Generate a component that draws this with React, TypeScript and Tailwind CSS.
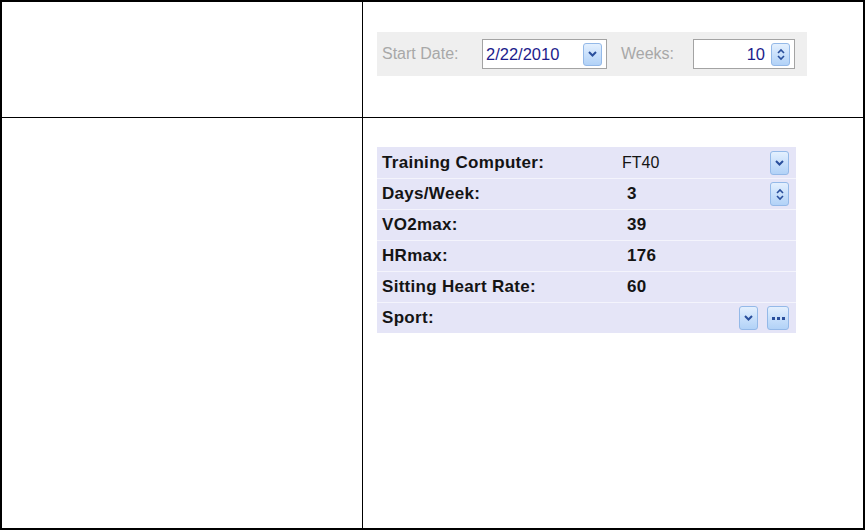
import React from 'react';

// Small XP-style blue button used for combos, spinners and the "..." picker
function BlueButton({ kind, className = '' }: { kind: 'down' | 'spin' | 'more'; className?: string }) {
  return (
    <div
      className={`flex items-center justify-center rounded-[3px] border border-[#94b9e8] bg-gradient-to-b from-[#e4f0fe] via-[#c9e0fb] to-[#b2d2f7] ${className}`}
    >
      {kind === 'down' && (
        <svg width="9" height="6" viewBox="0 0 9 6">
          <path d="M1 1 L4.5 4.5 L8 1" fill="none" stroke="#2a4f9c" strokeWidth="2" />
        </svg>
      )}
      {kind === 'spin' && (
        <svg width="8" height="13" viewBox="0 0 8 13">
          <path d="M1 5 L4 2 L7 5" fill="none" stroke="#2a4f9c" strokeWidth="1.6" />
          <path d="M1 8 L4 11 L7 8" fill="none" stroke="#2a4f9c" strokeWidth="1.6" />
        </svg>
      )}
      {kind === 'more' && (
        <svg width="13" height="3" viewBox="0 0 13 3">
          <rect x="0" y="0" width="3" height="3" fill="#2a4f9c" />
          <rect x="5" y="0" width="3" height="3" fill="#2a4f9c" />
          <rect x="10" y="0" width="3" height="3" fill="#2a4f9c" />
        </svg>
      )}
    </div>
  );
}

interface SettingRow {
  label: string;
  value?: string;
  bold?: boolean;
  control?: 'down' | 'spin' | 'sport';
}

const rows: SettingRow[] = [
  { label: 'Training Computer:', value: 'FT40', bold: false, control: 'down' },
  { label: 'Days/Week:', value: '3', bold: true, control: 'spin' },
  { label: 'VO2max:', value: '39', bold: true },
  { label: 'HRmax:', value: '176', bold: true },
  { label: 'Sitting Heart Rate:', value: '60', bold: true },
  { label: 'Sport:', control: 'sport' },
];

export default function App() {
  return (
    <div className="w-[866px] h-[531px] bg-white" style={{ fontFamily: '"Liberation Sans", Arial, sans-serif' }}>
      <div className="w-[865px] h-[530px] border-2 border-black grid grid-cols-[360px_1fr] grid-rows-[115px_1fr]">
        {/* top row */}
        <div />
        <div className="border-l border-black pl-[14px] pt-[30px]">
          <div className="w-[430px] h-[44px] bg-[#efefef] flex items-center pl-[5px] text-[16px]">
            <span className="w-[100px] text-[#a8a8a8]">Start Date:</span>
            <div className="w-[125px] h-[30px] bg-white border border-[#a3a3a3] flex items-center pl-[3px] pr-[4px]">
              <span className="flex-1 text-[#1c1c8c] text-[16.5px]">2/22/2010</span>
              <BlueButton kind="down" className="w-[19px] h-[23px]" />
            </div>
            <span className="ml-[14px] w-[72px] text-[#a8a8a8]">Weeks:</span>
            <div className="w-[102px] h-[30px] bg-white border border-[#a3a3a3] flex items-center justify-end pr-[4px]">
              <span className="text-[#1c1c8c] text-[16.5px] mr-[6px]">10</span>
              <BlueButton kind="spin" className="w-[19px] h-[23px]" />
            </div>
          </div>
        </div>

        {/* bottom row */}
        <div className="border-t border-black" />
        <div className="border-t border-l border-black pl-[14px] pt-[29px]">
          <div className="w-[419px] bg-[#e5e5f7]">
            {rows.map((row, i) => (
              <div
                key={row.label}
                className={`h-[31px] flex items-center pl-[5px] pr-[7px] text-[17px] tracking-[0.3px] text-[#141414] ${
                  i > 0 ? 'border-t border-[#f4f4fc]' : ''
                }`}
              >
                <span className="w-[245px] font-bold">{row.label}</span>
                <span className={`flex-1 ${row.bold ? 'font-bold' : '-ml-[5px] text-[16px] tracking-normal'}`}>{row.value}</span>
                {row.control === 'down' && <BlueButton kind="down" className="w-[19px] h-[24px]" />}
                {row.control === 'spin' && <BlueButton kind="spin" className="w-[19px] h-[24px]" />}
                {row.control === 'sport' && (
                  <div className="flex gap-[9px]">
                    <BlueButton kind="down" className="w-[19px] h-[24px]" />
                    <BlueButton kind="more" className="w-[22px] h-[24px]" />
                  </div>
                )}
              </div>
            ))}
          </div>
        </div>
      </div>
    </div>
  );
}
